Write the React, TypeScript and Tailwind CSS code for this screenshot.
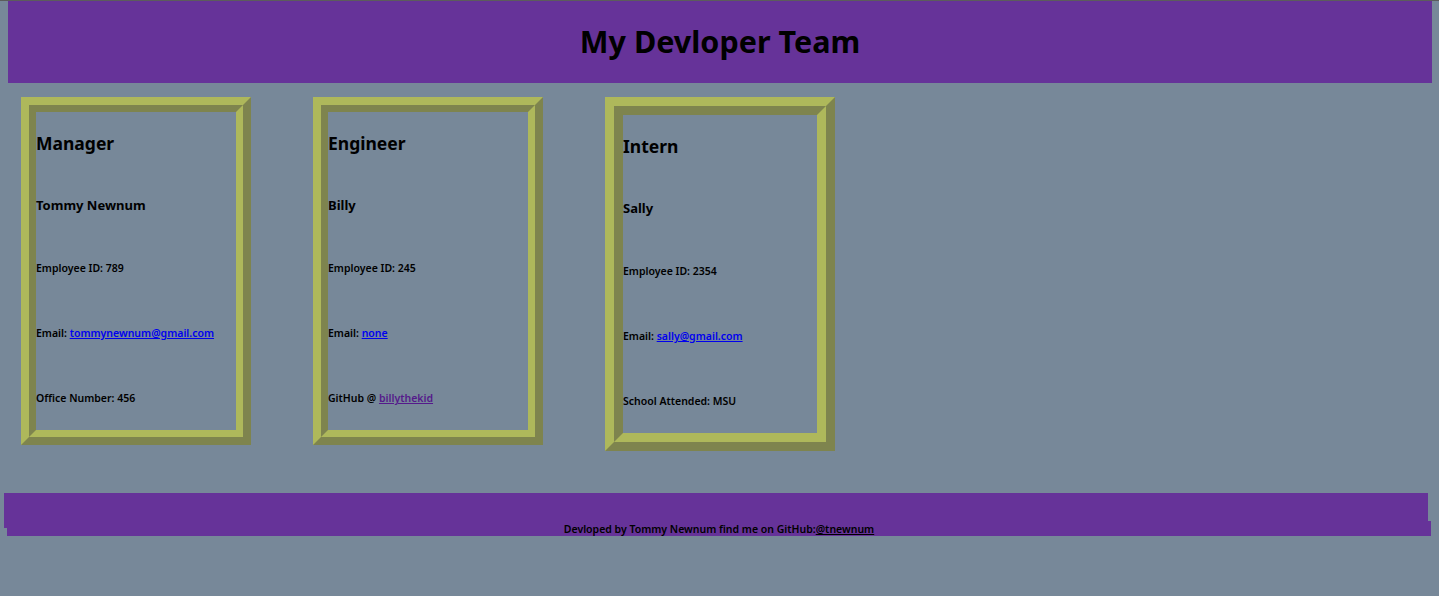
import React from 'react';

type Member = {
    role: string;
    name: string;
    id: string;
    email: string;
    emailLabel: string;
    extraLabel: string;
    extra: React.ReactNode;
    thick?: boolean;
};

const team: Member[] = [
    {
        role: 'Manager',
        name: 'Tommy Newnum',
        id: '789',
        email: 'mailto:tommynewnum@gmail.com',
        emailLabel: 'tommynewnum@gmail.com',
        extraLabel: 'Office Number: ',
        extra: '456',
    },
    {
        role: 'Engineer',
        name: 'Billy',
        id: '245',
        email: 'mailto:none',
        emailLabel: 'none',
        extraLabel: 'GitHub @ ',
        extra: (
            <a href="#" className="text-[#551a8b] underline">
                billythekid
            </a>
        ),
    },
    {
        role: 'Intern',
        name: 'Sally',
        id: '2354',
        email: 'mailto:sally@gmail.com',
        emailLabel: 'sally@gmail.com',
        extraLabel: 'School Attended: ',
        extra: 'MSU',
        thick: true,
    },
];

// ridge-style frame: light outer top/left, dark inner top/left
const Card = ({ m }: { m: Member }) => (
    <div
        className={`w-[230px] border-t-[#aeb85b] border-l-[#aeb85b] border-b-[#7e844e] border-r-[#7e844e] ${
            m.thick ? 'border-[9px]' : 'border-8'
        }`}
    >
        <div
            className={`border-t-[#7e844e] border-l-[#7e844e] border-b-[#aeb85b] border-r-[#aeb85b] flex flex-col pt-[19px] pb-[20px] ${
                m.thick ? 'border-[9px]' : 'border-[7px]'
            }`}
        >
            <h2 className="h-[24px] leading-[24px] text-[17.5px] font-bold">{m.role}</h2>
            <h4 className="h-[24px] leading-[24px] mt-[38px] text-[13px] font-bold">{m.name}</h4>
            <p className="h-[24px] leading-[24px] mt-[39px] text-[10.5px] font-semibold">Employee ID: {m.id}</p>
            <p className="h-[24px] leading-[24px] mt-[41px] text-[10.5px] font-semibold">
                Email:{' '}
                <a href={m.email} className="text-[#0000ee] underline">
                    {m.emailLabel}
                </a>
            </p>
            <p className="h-[24px] leading-[24px] mt-[41px] text-[10.5px] font-semibold">
                {m.extraLabel}
                {m.extra}
            </p>
        </div>
    </div>
);

export default function App() {
    return (
        <div
            className="min-h-[596px] bg-[#778899] border-t border-[#5c5c5c] text-black"
            style={{ fontFamily: "'Noto Sans', 'Open Sans', sans-serif" }}
        >
            <header className="ml-2 mr-[7px] h-[82px] bg-[#663399] flex items-center justify-center">
                <h1 className="text-[30.5px] font-bold">My Devloper Team</h1>
            </header>

            <main className="flex items-start gap-[62px] pl-[21px] mt-[14px]">
                {team.map((m) => (
                    <Card key={m.role} m={m} />
                ))}
            </main>

            <footer className="mt-[42px]">
                <div className="ml-1 w-[1424px] h-[35px] bg-[#663399]" />
                <p className="ml-[7px] w-[1424px] -mt-[7px] h-[15px] leading-[16px] bg-[#663399] text-center text-[10.5px] font-semibold">
                    Devloped by Tommy Newnum find me on GitHub:
                    <a href="#" className="text-black underline">
                        @tnewnum
                    </a>
                </p>
            </footer>
        </div>
    );
}
